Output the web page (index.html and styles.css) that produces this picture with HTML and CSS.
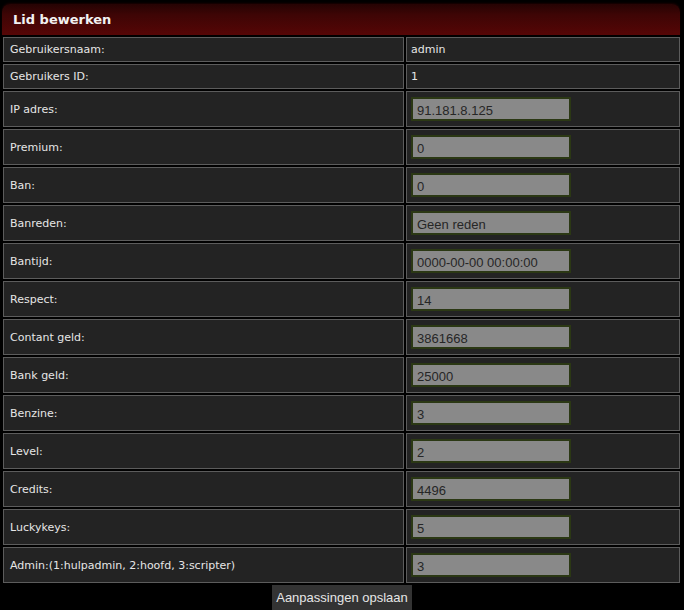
FILE: index.html
```html
<!DOCTYPE html>
<html>
<head>
<meta charset="utf-8">
<link rel="stylesheet" href="styles.css">
</head>
<body>
<div class="page">
  <div class="panel-head">Lid bewerken</div>
  <form class="edit-form">
    <table class="edit-table">
      <tr class="row-small"><td class="label">Gebruikersnaam:</td><td class="value">admin</td></tr>
      <tr class="row-small"><td class="label">Gebruikers ID:</td><td class="value">1</td></tr>
      <tr class="row-input"><td class="label">IP adres:</td><td class="value"><input class="field" type="text" value="91.181.8.125"></td></tr>
      <tr class="row-input"><td class="label">Premium:</td><td class="value"><input class="field" type="text" value="0"></td></tr>
      <tr class="row-input"><td class="label">Ban:</td><td class="value"><input class="field" type="text" value="0"></td></tr>
      <tr class="row-input"><td class="label">Banreden:</td><td class="value"><input class="field" type="text" value="Geen reden"></td></tr>
      <tr class="row-input"><td class="label">Bantijd:</td><td class="value"><input class="field" type="text" value="0000-00-00 00:00:00"></td></tr>
      <tr class="row-input"><td class="label">Respect:</td><td class="value"><input class="field" type="text" value="14"></td></tr>
      <tr class="row-input"><td class="label">Contant geld:</td><td class="value"><input class="field" type="text" value="3861668"></td></tr>
      <tr class="row-input"><td class="label">Bank geld:</td><td class="value"><input class="field" type="text" value="25000"></td></tr>
      <tr class="row-input"><td class="label">Benzine:</td><td class="value"><input class="field" type="text" value="3"></td></tr>
      <tr class="row-input"><td class="label">Level:</td><td class="value"><input class="field" type="text" value="2"></td></tr>
      <tr class="row-input"><td class="label">Credits:</td><td class="value"><input class="field" type="text" value="4496"></td></tr>
      <tr class="row-input"><td class="label">Luckykeys:</td><td class="value"><input class="field" type="text" value="5"></td></tr>
      <tr class="row-input"><td class="label">Admin:(1:hulpadmin, 2:hoofd, 3:scripter)</td><td class="value"><input class="field" type="text" value="3"></td></tr>
    </table>
    <div class="actions"><button class="save-btn" type="button">Aanpassingen opslaan</button></div>
  </form>
</div>
</body>
</html>
```

FILE: styles.css
```css
html, body {
  margin: 0;
  padding: 0;
  background: #000;
}
body {
  font-family: "DejaVu Sans", Verdana, sans-serif;
  color: #e0e0e0;
}
.page {
  padding: 4px 2px 0 1px;
  width: 681px;
}
.panel-head {
  height: 31px;
  margin-left: 1px;
  width: 678px;
  box-sizing: border-box;
  padding: 0 0 0 11px;
  line-height: 31px;
  font-size: 13px;
  font-weight: bold;
  color: #f2f2f2;
  background: linear-gradient(#250303 0%, #3e0505 35%, #560606 100%);
  border-radius: 8px 8px 0 0;
  box-shadow: 0 -1px 2px #1a0000;
}
.edit-form {
  margin: 0;
}
.edit-table {
  border-collapse: separate;
  border-spacing: 2px;
  width: 681px;
  table-layout: fixed;
}
.edit-table td {
  background: #232323;
  border: 1px solid #5c5c5c;
  font-size: 11px;
  color: #e6e6e6;
  padding: 0 0 0 6px;
  vertical-align: middle;
}
.edit-table td.label {
  width: 393px;
}
.row-small td {
  height: 23px;
}
.row-input td {
  height: 34px;
}
.edit-table td.value {
  padding-left: 4px;
}
.field {
  display: block;
  width: 160px;
  height: 24px;
  box-sizing: border-box;
  margin: 0;
  padding: 2px 0 0 4px;
  background: #898989;
  border: 2px solid #2b3814;
  font-family: "Liberation Sans", Arial, sans-serif;
  font-size: 13px;
  color: #262626;
}
.actions {
  display: flex;
  justify-content: center;
  padding-left: 1px;
}
.save-btn {
  margin: 0;
  width: 140px;
  height: 25px;
  padding: 0;
  border: none;
  background: #333333;
  color: #e6e6e6;
  font-family: "Liberation Sans", Arial, sans-serif;
  font-size: 13px;
}
```
